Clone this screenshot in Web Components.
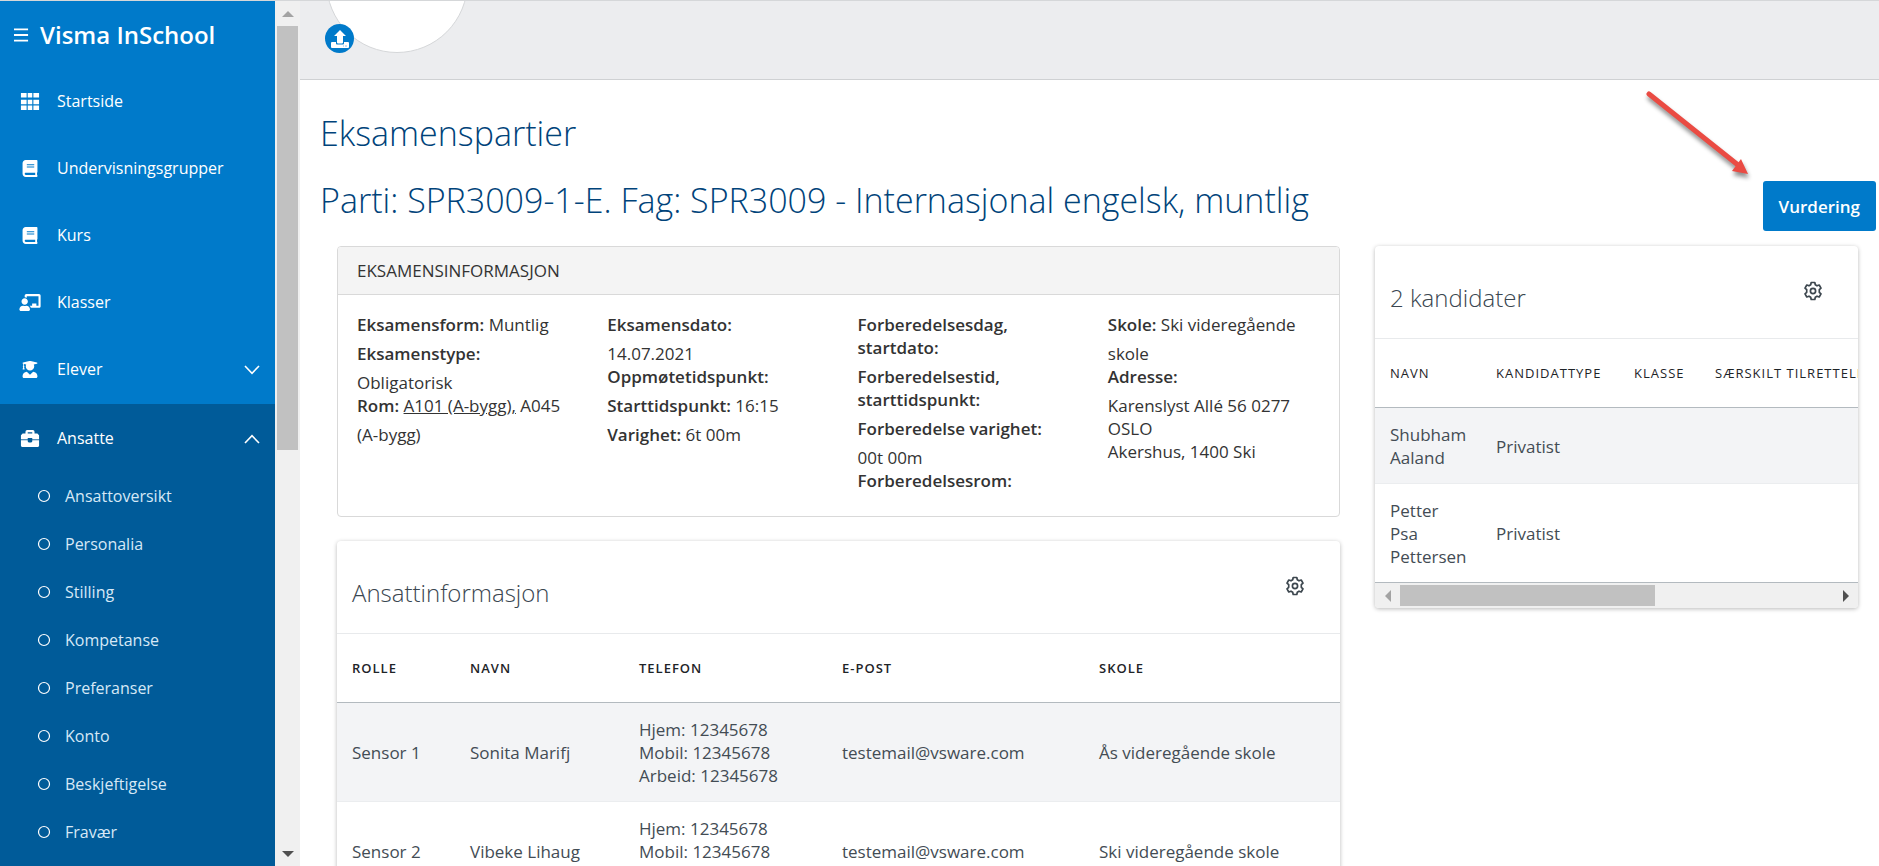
<!DOCTYPE html>
<html lang="no">
<head>
<meta charset="utf-8">
<title>Visma InSchool – Eksamenspartier</title>
<style>
  body { margin: 0; font-family: "Open Sans", "Noto Sans", sans-serif; font-size: 17px; line-height: 23px; color: #333; background: #fff; }
</style>
</head>
<body>
<app-shell>
  <side-nav slot="nav"></side-nav>
  <profile-banner slot="banner"></profile-banner>
  <exam-page></exam-page>
</app-shell>

<script>
const define = (name, html, setup) => {
  const template = document.createElement('template');
  template.innerHTML = html;
  customElements.define(name, class extends HTMLElement {
    constructor() {
      super();
      this.attachShadow({ mode: 'open' }).append(template.content.cloneNode(true));
    }
    connectedCallback() { if (setup) setup(this, this.shadowRoot); }
  });
};

const ICONS = {
  menu: ['0 0 16 14', '<path d="M0 1h15M0 7h15M0 13h15" stroke="currentColor" stroke-width="2"/>'],
  grid: ['0 0 16 15', '<path fill="currentColor" d="M0 0h5v4H0zM6 0h4v4H6zM11 0h5v4h-5zM0 6h5v4H0zM6 6h4v4H6zM11 6h5v4h-5zM0 11h5v4H0zM6 11h4v4H6zM11 11h5v4h-5z"/>'],
  book: ['0 0 448 512', '<path fill="currentColor" d="M448 360V24c0-13.300-10.700-24-24-24H96C43 0 0 43 0 96v320c0 53 43 96 96 96h328c13.300 0 24-10.700 24-24v-16c0-7.500-3.500-14.300-8.900-18.700-4.200-15.400-4.200-59.300 0-74.700 5.400-4.300 8.900-11.100 8.900-18.600zM128 134c0-3.300 2.700-6 6-6h212c3.300 0 6 2.700 6 6v20c0 3.300-2.700 6-6 6H134c-3.300 0-6-2.700-6-6v-20zm0 64c0-3.300 2.700-6 6-6h212c3.300 0 6 2.700 6 6v20c0 3.300-2.700 6-6 6H134c-3.300 0-6-2.700-6-6v-20zm253.400 250H96c-17.700 0-32-14.300-32-32 0-17.600 14.400-32 32-32h285.400c-1.900 17.100-1.900 46.900 0 64z"/>'],
  teacher: ['0 0 640 512', '<path fill="currentColor" d="M208 352c-2.400 0-4.800.4-7.100 1.100C188 357.300 174.400 360 160 360c-14.400 0-27.900-2.700-41-6.900-2.300-.7-4.600-1.100-7-1.100C50 352-.3 402.500 0 464.600.1 490.900 21.700 512 48 512h224c26.300 0 47.900-21.100 48-47.400.3-62.100-50-112.600-112-112.600zm-48-32c53 0 96-43 96-96s-43-96-96-96-96 43-96 96 43 96 96 96zM592 0H208c-26.500 0-48 22.200-48 49.600V96c23.400 0 45.100 6.800 64 17.800V64h352v288h-64v-64H384v64h-76.200c19.100 16.700 33.100 38.700 39.700 64H592c26.500 0 48-22.200 48-49.600V49.600C640 22.200 618.500 0 592 0z"/>'],
  graduate: ['0 0 448 512', '<path fill="currentColor" d="M319.400 320.600L224 416l-95.400-95.400C57.100 323.700 0 382.200 0 454.400v9.600c0 26.500 21.500 48 48 48h352c26.500 0 48-21.500 48-48v-9.600c0-72.200-57.100-130.700-128.600-133.800zM13.600 79.800l6.400 1.500v58.400c-7 4.200-12 11.500-12 20.300 0 8.400 4.600 15.400 11.100 19.700L3.500 242c-1.700 6.900 2.100 14 7.600 14h41.800c5.500 0 9.300-7.100 7.600-14l-15.600-62.300C51.400 175.400 56 168.400 56 160c0-8.800-5-16.100-12-20.300V87.100l66 15.900c-8.600 17.200-14 36.400-14 57 0 70.700 57.300 128 128 128s128-57.300 128-128c0-20.600-5.300-39.800-14-57l96.300-23.200c18.200-4.400 18.200-27.100 0-31.500l-190.400-46c-13-3.100-26.700-3.100-39.800 0L13.600 48.200c-18.100 4.400-18.100 27.200 0 31.600z"/>'],
  toolbox: ['0 0 16 15', '<path fill="currentColor" fill-rule="evenodd" d="M4 3V1.500Q4 0 5.500 0h5Q12 0 12 1.500V3h2.500L16 4.700V8H10V7H6v1H0V4.700L1.500 3zM6 2v1h4V2zM0 9h6v1q0 1 1 1h2q1 0 1-1V9h6v5q0 1-1 1H1q-1 0-1-1z"/><path d="M0 8h6v1H0zM10 8h6v1h-6z" fill="currentColor" opacity=".35"/>'],
  down: ['0 0 16 10', '<path d="M1 1l7 7.300L15 1" fill="none" stroke="currentColor" stroke-width="1.600"/>'],
  up: ['0 0 16 10', '<path d="M1 9l7-7.300L15 9" fill="none" stroke="currentColor" stroke-width="1.600"/>'],
  ring: ['0 0 14 14', '<circle cx="7" cy="7" r="5.500" fill="none" stroke="currentColor" stroke-width="1.200"/>'],
  upload: ['0 0 18 18', '<path fill="currentColor" d="M9 0l6 6h-3v6.500q0 1-1 1H7q-1 0-1-1V6H3zM0 13q0-1 1-1h4v1.500q0 1 1 1h6q1 0 1-1V12h4q1 0 1 1v4q0 1-1 1H1q-1 0-1-1z"/><path d="M12 16h1M14 16h2" stroke="#8cc0ea"/>'],
  gear: ['0 0 20 20', '<g fill="none" stroke="currentColor" stroke-linejoin="round"><path stroke-width="1.700" d="M8.200 1.500h3.600l.5 2.300 1.700 1 2.200-.8 1.800 3.100-1.700 1.600v2.600l1.700 1.600-1.800 3.100-2.200-.8-1.700 1-.5 2.300H8.200l-.5-2.300-1.700-1-2.200.8L2 12.900l1.700-1.600V8.700L2 7.100 3.800 4l2.200.8 1.700-1z"/><circle cx="10" cy="10" r="2.600" stroke-width="1.700"/></g>'],
};
define('ui-icon', `<style>
  :host { display: inline-flex; align-items: center; justify-content: center; }
  svg { display: block; width: 100%; height: 100%; }
</style><svg aria-hidden="true"></svg>`, (host, root) => {
  const [box, body] = ICONS[host.getAttribute('name')];
  const svg = root.querySelector('svg');
  svg.setAttribute('viewBox', box);
  svg.innerHTML = body;
});

define('scroll-track', `<style>
  :host { display: flex; flex-direction: column; align-items: center; width: 25px; background: #f0f0f0; }
  :host([horizontal]) { flex-direction: row; width: auto; height: 25px; }
  .arrow { flex: none; width: 25px; height: 25px; display: grid; place-items: center; color: #505050; }
  .start { color: #a3a3a3; }
  .rail { flex: 1; width: 21px; }
  .thumb { width: 100%; height: 52%; background: #c1c1c1; }
  :host([horizontal]) .rail { width: auto; height: 21px; }
  :host([horizontal]) .thumb { height: 100%; width: 59%; }
  svg { width: 12px; height: 12px; fill: currentColor; }
  :host([horizontal]) svg { transform: rotate(-90deg); }
</style>
<span class="arrow start"><svg viewBox="0 0 12 12"><path d="M0 9l6-6 6 6z"/></svg></span>
<div class="rail"><div class="thumb"></div></div>
<span class="arrow"><svg viewBox="0 0 12 12"><path d="M0 3l6 6 6-6z"/></svg></span>`);

define('app-shell', `<style>
  :host { display: grid; grid-template-columns: auto minmax(0, 1fr); grid-template-rows: minmax(0, 1fr); height: 100vh; box-sizing: border-box; border-top: 1px solid #d5d7d9; overflow: hidden; }
  aside { display: flex; min-height: 0; }
  main { min-width: 0; min-height: 0; overflow: hidden; }
</style>
<aside><slot name="nav"></slot><scroll-track></scroll-track></aside>
<main><slot name="banner"></slot><slot></slot></main>`);

define('nav-item', `<style>
  :host { display: block; font-size: 16px; }
  a { display: flex; align-items: center; height: 67px; padding: 0 15px 0 19px; color: #fff; text-decoration: none; }
  .icon { width: 22px; height: 17px; margin-right: 16px; }
  .label { flex: 1; }
  .chev { width: 16px; height: 10px; }
  :host([sub]) a { height: 48px; padding-left: 37px; color: #d6e8f6; }
  :host([sub]) .icon { width: 14px; height: 14px; margin-right: 14px; color: #fff; }
</style><a href="#"><span class="label"><slot></slot></span></a>`, (host, root) => {
  const makeIcon = (name, className) => {
    const icon = document.createElement('ui-icon');
    icon.className = className;
    icon.setAttribute('name', name);
    return icon;
  };
  const link = root.querySelector('a');
  link.prepend(makeIcon(host.getAttribute('icon'), 'icon'));
  if (host.hasAttribute('chevron')) link.append(makeIcon(host.getAttribute('chevron'), 'chev'));
});

define('side-nav', `<style>
  :host { display: block; width: 275px; overflow: hidden; background: #007aca; color: #fff; }
  header { display: flex; align-items: center; height: 67px; padding-left: 14px; gap: 11px; }
  button { all: unset; display: flex; cursor: pointer; }
  button ui-icon { width: 15px; height: 14px; }
  .brand { font-size: 24px; line-height: 32px; font-weight: 600; }
  .open { margin-top: 1px; padding: 1px 0 48px; background: #005b99; }
</style>
<header><button aria-label="Meny"><ui-icon name="menu"></ui-icon></button><span class="brand">Visma InSchool</span></header>
<nav>
  <nav-item icon="grid">Startside</nav-item>
  <nav-item icon="book">Undervisningsgrupper</nav-item>
  <nav-item icon="book">Kurs</nav-item>
  <nav-item icon="teacher">Klasser</nav-item>
  <nav-item icon="graduate" chevron="down">Elever</nav-item>
  <div class="open">
    <nav-item icon="toolbox" chevron="up">Ansatte</nav-item>
    <nav-item sub icon="ring">Ansattoversikt</nav-item>
    <nav-item sub icon="ring">Personalia</nav-item>
    <nav-item sub icon="ring">Stilling</nav-item>
    <nav-item sub icon="ring">Kompetanse</nav-item>
    <nav-item sub icon="ring">Preferanser</nav-item>
    <nav-item sub icon="ring">Konto</nav-item>
    <nav-item sub icon="ring">Beskjeftigelse</nav-item>
    <nav-item sub icon="ring">Fravær</nav-item>
  </div>
</nav>`);

define('profile-banner', `<style>
  :host { display: block; position: relative; height: 78px; overflow: hidden; background: #ecedef; border-bottom: 1px solid #cfd1d3; }
  .avatar { position: absolute; left: 26px; bottom: 26px; width: 140px; height: 140px; border: 1px solid #d5d7d9; border-radius: 50%; background: #fff; }
  button { position: absolute; left: 25px; top: 23px; width: 29px; height: 29px; padding: 0; border: 0; border-radius: 50%; background: #007aca; color: #fff; display: grid; place-items: center; }
  ui-icon { width: 18px; height: 18px; }
</style><div class="avatar"></div><button aria-label="Last opp bilde"><ui-icon name="upload"></ui-icon></button>`);

define('info-panel', `<style>
  :host { display: block; border: 1px solid #d9d9d9; border-radius: 4px; overflow: hidden; }
  h3 { margin: 0; padding: 12px 19px; border-bottom: 1px solid #d9d9d9; background: #f4f4f4; font-size: 17px; font-weight: 400; line-height: 23px; }
  .cols { display: grid; grid-template-columns: repeat(4, 1fr); padding: 18px 0; }
</style><h3><slot name="title"></slot></h3><div class="cols"><slot></slot></div>`);

define('info-field', `<style>
  :host { display: block; }
  .label { display: inline-block; max-width: 100%; margin-bottom: 6px; font-weight: 600; }
</style><span class="label"><slot name="label"></slot></span> <slot></slot>`);

define('data-card', `<style>
  :host { display: block; min-width: 0; border-radius: 4px; overflow: hidden; background: #fff; box-shadow: 0 1px 4px rgba(0,0,0,.28); }
  header { display: flex; align-items: flex-start; justify-content: space-between; height: 93px; box-sizing: border-box; padding: 35px 35px 0 15px; border-bottom: 1px solid #e8eaec; }
  h3 { margin: 0; font-size: 24px; line-height: 34px; font-weight: 300; color: #3a4650; }
  button { padding: 0; border: 0; background: none; color: #3c464e; display: flex; }
  button ui-icon { width: 20px; height: 20px; }
</style><header><h3><slot name="title"></slot></h3><button aria-label="Innstillinger"><ui-icon name="gear"></ui-icon></button></header><slot></slot>`);

const TABLE_CSS = `
  :host { display: block; }
  table { border-collapse: separate; border-spacing: 0; width: 100%; table-layout: fixed; }
  th { height: 68px; padding: 0 15px; border-bottom: 1px solid #b3babf; text-align: left; font-size: 13px; font-weight: 600; letter-spacing: 1px; color: #1e2428; white-space: nowrap; }
  td { padding: 15px 15px 14px; border-bottom: 1px solid #ebedef; color: #434c54; vertical-align: middle; }
  tbody tr:nth-child(odd) td { background: #f3f4f6; }`;

define('staff-table', `<style>${TABLE_CSS}</style>
<table>
  <colgroup><col style="width:118px"><col style="width:169px"><col style="width:203px"><col style="width:257px"><col></colgroup>
  <thead><tr><th>ROLLE</th><th>NAVN</th><th>TELEFON</th><th>E-POST</th><th>SKOLE</th></tr></thead>
  <tbody>
    <tr><td>Sensor 1</td><td>Sonita Marifj</td><td>Hjem: 12345678<br>Mobil: 12345678<br>Arbeid: 12345678</td><td>testemail@vsware.com</td><td>Ås videregående skole</td></tr>
    <tr><td>Sensor 2</td><td>Vibeke Lihaug</td><td>Hjem: 12345678<br>Mobil: 12345678<br>Arbeid: 12345678</td><td>testemail@vsware.com</td><td>Ski videregående skole</td></tr>
  </tbody>
</table>`);

define('candidate-table', `<style>${TABLE_CSS}
  .view { overflow: hidden; }
  table { width: 820px; }
  th { font-weight: 500; }
  tbody tr:last-child td { border-bottom-color: #b3babf; }
</style>
<div class="view"><table>
  <colgroup><col style="width:106px"><col style="width:138px"><col style="width:81px"><col></colgroup>
  <thead><tr><th>NAVN</th><th>KANDIDATTYPE</th><th>KLASSE</th><th>SÆRSKILT TILRETTELEGGING</th></tr></thead>
  <tbody>
    <tr><td>Shubham Aaland</td><td>Privatist</td><td></td><td></td></tr>
    <tr><td>Petter<br>Psa<br>Pettersen</td><td>Privatist</td><td></td><td></td></tr>
  </tbody>
</table></div>
<scroll-track horizontal></scroll-track>`);

define('exam-page', `<style>
  :host { display: block; position: relative; padding: 30px 21px 30px 20px; }
  h1, h2 { margin: 0; font-size: 34px; line-height: 46px; font-weight: 300; color: #00437a; }
  .title { display: flex; align-items: flex-start; justify-content: space-between; margin: 21px -18px 0 0; }
  .title button { flex: none; height: 50px; padding: 0 16px; margin-top: 4px; border: 0; border-radius: 3px; background: #007aca; color: #fff; font: inherit; font-weight: 600; }
  .cols { display: grid; grid-template-columns: minmax(0, 27fr) minmax(0, 13fr); gap: 35px; align-items: start; margin: 15px 0 0 17px; }
  .left { display: grid; gap: 24px; min-width: 0; }
  .field-col { padding: 0 19px; }
  a { color: inherit; text-decoration: underline; }
  .pointer { position: absolute; top: 10px; right: 125px; width: 110px; height: 95px; overflow: visible; filter: drop-shadow(1px 4px 2px rgba(0,0,0,.45)); pointer-events: none; }
</style>
<h1>Eksamenspartier</h1>
<div class="title"><h2>Parti: SPR3009-1-E. Fag: SPR3009 - Internasjonal engelsk, muntlig</h2><button>Vurdering</button></div>
<svg class="pointer" viewBox="0 0 110 95" aria-hidden="true"><path d="M5 4L94 75" stroke="#ea4b43" stroke-width="5" stroke-linecap="round"/><path d="M97 69L104 84L88 81z" fill="#ea4b43"/></svg>
<div class="cols">
  <div class="left">
    <info-panel>
      <span slot="title">EKSAMENSINFORMASJON</span>
      <div class="field-col">
        <info-field><span slot="label">Eksamensform:</span>Muntlig</info-field>
        <info-field><span slot="label">Eksamenstype:</span>Obligatorisk</info-field>
        <info-field><span slot="label">Rom:</span><a href="#">A101 (A-bygg),</a> A045 (A-bygg)</info-field>
      </div>
      <div class="field-col">
        <info-field><span slot="label">Eksamensdato:</span>14.07.2021</info-field>
        <info-field><span slot="label">Oppmøtetidspunkt:</span></info-field>
        <info-field><span slot="label">Starttidspunkt:</span>16:15</info-field>
        <info-field><span slot="label">Varighet:</span>6t 00m</info-field>
      </div>
      <div class="field-col">
        <info-field><span slot="label">Forberedelsesdag, startdato:</span></info-field>
        <info-field><span slot="label">Forberedelsestid, starttidspunkt:</span></info-field>
        <info-field><span slot="label">Forberedelse varighet:</span>00t 00m</info-field>
        <info-field><span slot="label">Forberedelsesrom:</span></info-field>
      </div>
      <div class="field-col">
        <info-field><span slot="label">Skole:</span>Ski videregående skole</info-field>
        <info-field><span slot="label">Adresse:</span><br>Karenslyst Allé 56 0277 OSLO<br>Akershus, 1400 Ski</info-field>
      </div>
    </info-panel>
    <data-card><span slot="title">Ansattinformasjon</span><staff-table></staff-table></data-card>
  </div>
  <data-card><span slot="title">2 kandidater</span><candidate-table></candidate-table></data-card>
</div>`);
</script>
</body>
</html>
